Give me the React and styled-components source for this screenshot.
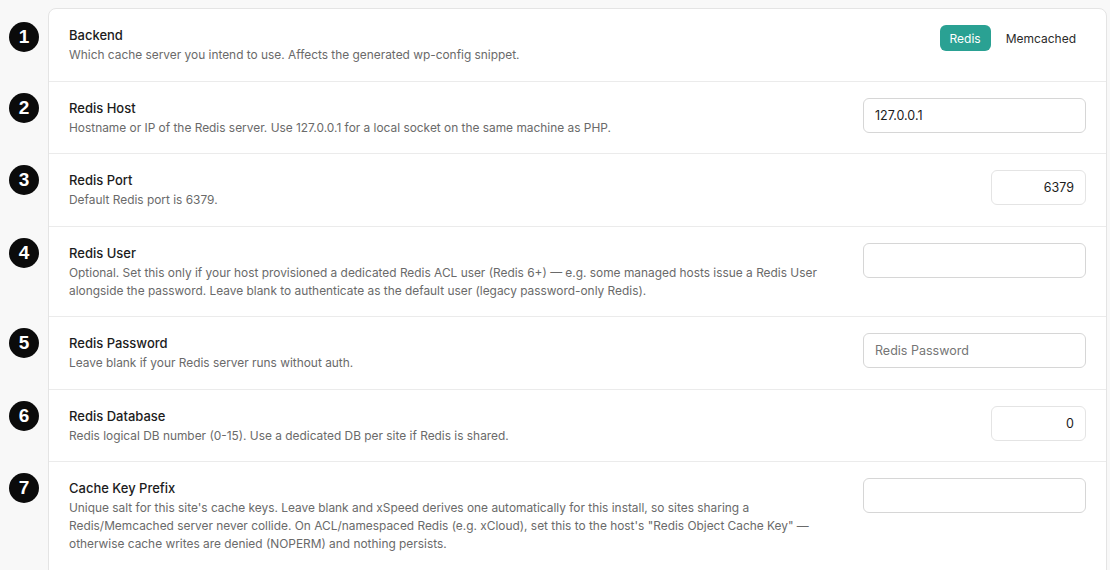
import React from 'react'
import styled, { createGlobalStyle } from 'styled-components'

const GlobalStyle = createGlobalStyle`
  html, body {
    margin: 0;
    padding: 0;
    background: #f8f8f8;
    font-family: Inter, "Noto Sans", "Liberation Sans", sans-serif;
    -webkit-font-smoothing: antialiased;
  }
`

const Page = styled.div`
  padding: 8px 3px 0 48px;
`

const Card = styled.div`
  background: #fff;
  border: 1px solid #e4e4e4;
  border-radius: 8px;
  border-bottom-left-radius: 0;
  border-bottom-right-radius: 0;
`

const Row = styled.div`
  position: relative;
  display: flex;
  align-items: flex-start;
  gap: 40px;
  padding: 16px 20px 16.5px 20px;
  border-top: ${p => (p.first ? 'none' : '1px solid #ebebeb')};
`

const Marker = styled.span`
  position: absolute;
  left: -40px;
  top: ${p => p.top || 12}px;
  width: 30px;
  height: 30px;
  border-radius: 50%;
  background: #0b0b0b;
  color: #fff;
  display: flex;
  align-items: center;
  justify-content: center;
  font-family: "Liberation Sans", Arial, sans-serif;
  font-weight: bold;
  font-size: 19px;
`

const Text = styled.div`
  flex: 1;
  min-width: 0;
  padding-top: 1px;
`

const Title = styled.div`
  font-size: 13px;
  font-weight: 500;
  color: #1c1c1c;
  line-height: 18px;
  margin-bottom: 2px;
`

const Desc = styled.div`
  font-size: 11.9px;
  color: #6a6a6a;
  line-height: 18px;
`

const Control = styled.div`
  width: 223px;
  flex-shrink: 0;
  display: flex;
  justify-content: flex-end;
`

const Segmented = styled.div`
  display: flex;
  gap: 6px;
`

const SegButton = styled.button`
  border: none;
  border-radius: 6px;
  height: 26px;
  padding: 0 10px 0 ${p => (p.active ? 10 : 9)}px;
  font-family: inherit;
  font-size: 12px;
  font-weight: 400;
  background: ${p => (p.active ? '#2aa193' : 'transparent')};
  color: ${p => (p.active ? '#fff' : '#2a2a2a')};
  cursor: pointer;
`

const Input = styled.input`
  box-sizing: border-box;
  width: ${p => p.w || 223}px;
  height: 35px;
  border: 1px solid ${p => (p.number ? '#e4e4e4' : '#d6d6d6')};
  border-radius: 6px;
  padding: 0 11px;
  font-family: inherit;
  font-size: 12.5px;
  color: #1c1c1c;
  text-align: ${p => (p.number ? 'right' : 'left')};
  background: #fff;
  outline: none;
  &::placeholder {
    color: #757575;
  }
`

const rows = [
  {
    title: 'Backend',
    desc: 'Which cache server you intend to use. Affects the generated wp-config snippet.',
    control: 'segmented',
  },
  {
    title: 'Redis Host',
    desc: 'Hostname or IP of the Redis server. Use 127.0.0.1 for a local socket on the same machine as PHP.',
    control: 'text',
    value: '127.0.0.1',
  },
  {
    title: 'Redis Port',
    desc: 'Default Redis port is 6379.',
    control: 'number',
    value: '6379',
  },
  {
    title: 'Redis User',
    desc: 'Optional. Set this only if your host provisioned a dedicated Redis ACL user (Redis 6+) — e.g. some managed hosts issue a Redis User alongside the password. Leave blank to authenticate as the default user (legacy password-only Redis).',
    control: 'text',
    value: '',
  },
  {
    title: 'Redis Password',
    desc: 'Leave blank if your Redis server runs without auth.',
    control: 'text',
    value: '',
    placeholder: 'Redis Password',
  },
  {
    title: 'Redis Database',
    desc: 'Redis logical DB number (0-15). Use a dedicated DB per site if Redis is shared.',
    control: 'number',
    value: '0',
  },
  {
    title: 'Cache Key Prefix',
    desc: 'Unique salt for this site\'s cache keys. Leave blank and xSpeed derives one automatically for this install, so sites sharing a Redis/Memcached server never collide. On ACL/namespaced Redis (e.g. xCloud), set this to the host\'s "Redis Object Cache Key" — otherwise cache writes are denied (NOPERM) and nothing persists.',
    control: 'text',
    value: '',
  },
]

const renderControl = row => {
  if (row.control === 'segmented') {
    return (
      <Segmented>
        <SegButton active>Redis</SegButton>
        <SegButton>Memcached</SegButton>
      </Segmented>
    )
  }
  if (row.control === 'number') {
    return <Input number w={95} defaultValue={row.value} />
  }
  return <Input defaultValue={row.value} placeholder={row.placeholder} />
}

const App = () => {
  return (
    <Page>
      <GlobalStyle />
      <Card>
        {rows.map((row, i) => (
          <Row key={row.title} first={i === 0}>
            <Marker top={i === 0 ? 13 : 11}>{i + 1}</Marker>
            <Text>
              <Title>{row.title}</Title>
              <Desc>{row.desc}</Desc>
            </Text>
            <Control>{renderControl(row)}</Control>
          </Row>
        ))}
      </Card>
    </Page>
  )
}

export default App
